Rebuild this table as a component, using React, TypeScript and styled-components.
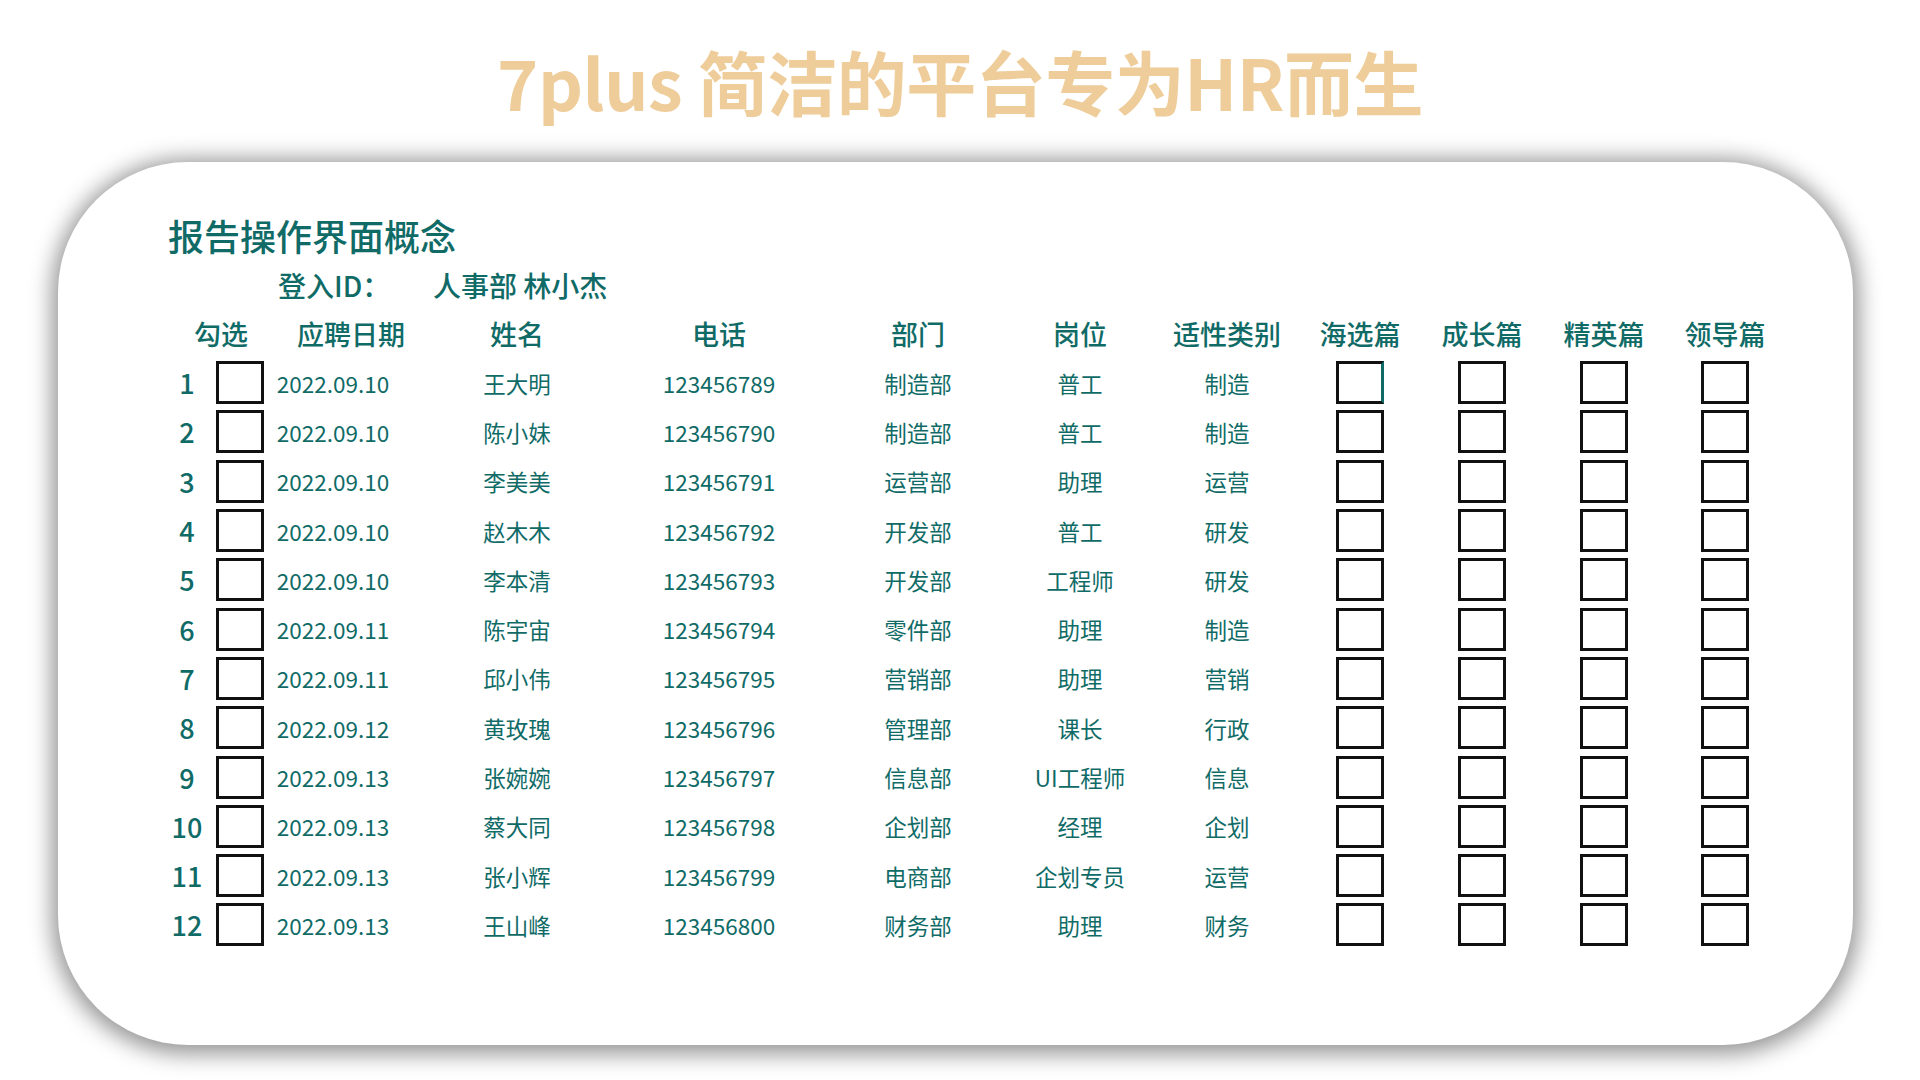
import React from "react";
import styled, { createGlobalStyle } from "styled-components";

const GlobalStyle = createGlobalStyle`
  html, body {
    margin: 0;
    padding: 0;
    background: #ffffff;
  }
  body {
    font-family: "Noto Sans CJK SC", "Noto Sans", sans-serif;
    width: 1920px;
    height: 1080px;
    overflow: hidden;
  }
`;

const TEAL = "#106b67";

const Page = styled.div`
  width: 1920px;
  height: 1080px;
  box-sizing: border-box;
  padding-top: 41px;
`;

const Title = styled.h1`
  margin: 0;
  height: 80px;
  line-height: 80px;
  text-align: center;
  font-size: 70px;
  font-weight: 700;
  color: #eecd9a;
  letter-spacing: -0.5px;
  white-space: nowrap;
`;

const Card = styled.section`
  margin: 41px 0 0 58px;
  width: 1795px;
  height: 883px;
  box-sizing: border-box;
  padding: 51px 0 0 110px;
  background: #ffffff;
  border-radius: 130px;
  box-shadow: 0 3px 22px 6px rgba(0, 0, 0, 0.42);
  color: ${TEAL};
`;

const Heading = styled.h2`
  margin: 0;
  font-size: 36px;
  line-height: 44px;
  font-weight: 500;
  color: ${TEAL};
`;

const LoginRow = styled.div`
  display: flex;
  align-items: center;
  margin-top: 10px;
  padding-left: 110px;
  font-size: 28px;
  line-height: 36px;
  font-weight: 500;
`;

const LoginLabel = styled.span`
  width: 155px;
`;

const Table = styled.div`
  margin-top: 11px;
  display: grid;
  grid-template-columns: 38px 68px 118px 250px 154px 244px 80px 214px 52px 192px 52px 190px;
  grid-template-rows: 44px repeat(12, 49.3px);
`;

const HeadCell = styled.div<{ $span?: number; $shift?: number }>`
  display: flex;
  align-items: flex-start;
  justify-content: center;
  white-space: nowrap;
  font-size: 27px;
  line-height: 40px;
  font-weight: 500;
  grid-column: span ${(p) => p.$span ?? 1};
  padding-left: ${(p) => p.$shift ?? 0}px;
`;

const NumCell = styled.div`
  display: flex;
  align-items: center;
  justify-content: center;
  white-space: nowrap;
  font-size: 27px;
  font-weight: 500;
`;

const Cell = styled.div`
  display: flex;
  align-items: center;
  justify-content: center;
  white-space: nowrap;
  font-size: 22.5px;
`;

const Box = styled.span<{ $accent?: boolean }>`
  display: block;
  width: 48px;
  height: 43px;
  box-sizing: border-box;
  border: 3px solid #111111;
  border-right-color: ${(p) => (p.$accent ? TEAL : "#111111")};
  background: #ffffff;
`;

type Row = [string, string, string, string, string, string];

const rows: Row[] = [
  ["2022.09.10", "王大明", "123456789", "制造部", "普工", "制造"],
  ["2022.09.10", "陈小妹", "123456790", "制造部", "普工", "制造"],
  ["2022.09.10", "李美美", "123456791", "运营部", "助理", "运营"],
  ["2022.09.10", "赵木木", "123456792", "开发部", "普工", "研发"],
  ["2022.09.10", "李本清", "123456793", "开发部", "工程师", "研发"],
  ["2022.09.11", "陈宇宙", "123456794", "零件部", "助理", "制造"],
  ["2022.09.11", "邱小伟", "123456795", "营销部", "助理", "营销"],
  ["2022.09.12", "黄玫瑰", "123456796", "管理部", "课长", "行政"],
  ["2022.09.13", "张婉婉", "123456797", "信息部", "UI工程师", "信息"],
  ["2022.09.13", "蔡大同", "123456798", "企划部", "经理", "企划"],
  ["2022.09.13", "张小辉", "123456799", "电商部", "企划专员", "运营"],
  ["2022.09.13", "王山峰", "123456800", "财务部", "助理", "财务"],
];

const headers = ["姓名", "电话", "部门", "岗位", "适性类别", "海选篇", "成长篇", "精英篇", "领导篇"];

export default function App() {
  return (
    <>
      <GlobalStyle />
      <Page>
        <Title>7plus 简洁的平台专为HR而生</Title>
        <Card>
          <Heading>报告操作界面概念</Heading>
          <LoginRow>
            <LoginLabel>登入ID：</LoginLabel>
            <span>人事部 林小杰</span>
          </LoginRow>
          <Table>
            <HeadCell $span={2}>勾选</HeadCell>
            <HeadCell $shift={36}>应聘日期</HeadCell>
            {headers.map((h) => (
              <HeadCell key={h}>{h}</HeadCell>
            ))}
            {rows.map((r, i) => (
              <React.Fragment key={i}>
                <NumCell>{i + 1}</NumCell>
                <Cell>
                  <Box />
                </Cell>
                {r.map((v, j) => (
                  <Cell key={j}>{v}</Cell>
                ))}
                {[0, 1, 2, 3].map((k) => (
                  <Cell key={"b" + k}>
                    <Box $accent={i === 0 && k === 0} />
                  </Cell>
                ))}
              </React.Fragment>
            ))}
          </Table>
        </Card>
      </Page>
    </>
  );
}
